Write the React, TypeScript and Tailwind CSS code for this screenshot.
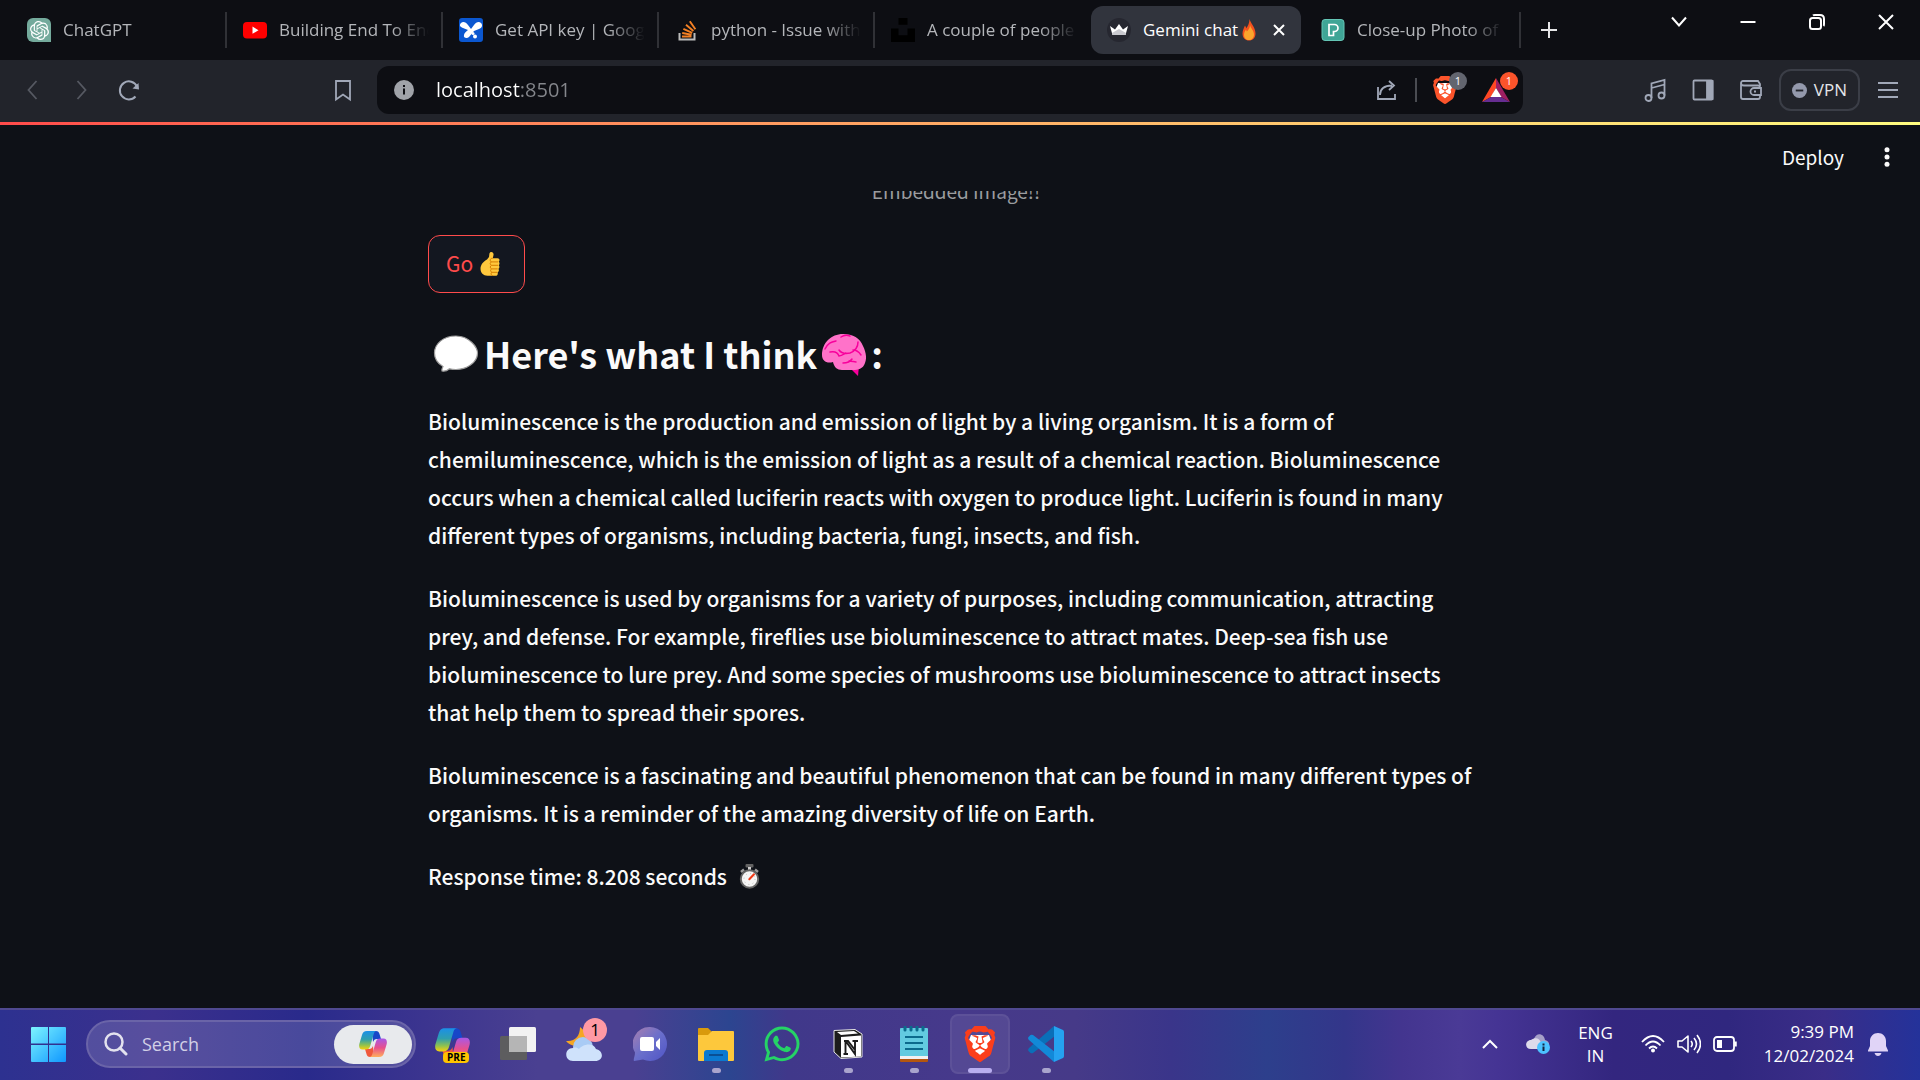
import type { ReactNode } from "react";
import { SiBrave, SiOpenai } from "react-icons/si";
import { FaWhatsapp } from "react-icons/fa";

const paragraphs = [
  "Bioluminescence is the production and emission of light by a living organism. It is a form of chemiluminescence, which is the emission of light as a result of a chemical reaction. Bioluminescence occurs when a chemical called luciferin reacts with oxygen to produce light. Luciferin is found in many different types of organisms, including bacteria, fungi, insects, and fish.",
  "Bioluminescence is used by organisms for a variety of purposes, including communication, attracting prey, and defense. For example, fireflies use bioluminescence to attract mates. Deep-sea fish use bioluminescence to lure prey. And some species of mushrooms use bioluminescence to attract insects that help them to spread their spores.",
  "Bioluminescence is a fascinating and beautiful phenomenon that can be found in many different types of organisms. It is a reminder of the amazing diversity of life on Earth.",
];

function Flame() {
  return (
    <svg viewBox="0 0 14 22" className="h-[22px] w-[14px] shrink-0" aria-label="fire">
      <path d="M7.5 0C8 3.5 13.5 8 13.5 14.5 13.5 19 10.5 21.500 7 21.500S.5 19 .5 14.500C.5 11 2 9 3 6.500c.7 1 1 1.800 1.200 2.800C6 7 7.500 4 7.500 0Z" fill="#f4511e" />
      <path d="M8 6c.5 3 4 5.500 4 9.500 0 3.500-2.200 5.500-5 5.500s-5-2-5-5.300C2 13.500 3 12 4 10.500c.4.700.6 1.200.8 2C6.500 11 8 9 8 6Z" fill="#fba52c" />
    </svg>
  );
}

function Thumb() {
  return (
    <svg viewBox="0 0 28 24" className="h-6 w-7" aria-label="thumbs up">
      <path d="M8 7.500 10 5l.4-3.200C10.600.6 11.400 0 12.300 0c1.600 0 2.500 1.300 2.200 3l-.7 3.200h4.700c1.300 0 2 .8 2 1.900 0 .7-.3 1.300-.8 1.600.6.4.8 1 .8 1.700 0 .8-.3 1.500-.8 1.900.5.4.7 1 .7 1.600 0 .9-.4 1.500-1 1.900.3.400.5.900.5 1.500 0 1-.6 1.700-1.300 2 .2.400.2.700.2 1.100 0 1.400-.9 2.300-2.300 2.300H8.500C4.300 23.700 1.500 20.800 1.500 16.800 1.500 12.700 4.500 9.500 8 7.500Z" fill="#ffc83d" />
      <path d="M19 9.900h-6.500M19 13.300h-6.500M18.700 16.900h-6.200M18.200 20.300h-5.500M13.800 6.200c-1.800 0-2.600.8-2.600 2s.7 1.600 1.300 1.700c-1 .3-1.300 1-1.300 1.700s.4 1.500 1.300 1.700c-.8.300-1.200 1-1.200 1.800s.4 1.500 1.200 1.800c-.6.300-.9.900-.9 1.600 0 .9.500 1.500 1.200 1.800-.5.300-.7.800-.7 1.400 0 1 .7 2 2 2" fill="none" stroke="#d67d00" strokeWidth="1" />
    </svg>
  );
}

function SpeechBubble() {
  return (
    <svg viewBox="0 -2 46 40" className="h-10 w-[46px] shrink-0" aria-label="speech balloon">
      <path d="M23 1C10 1 1.500 9 1.500 18c0 6 3.300 10.500 8.500 13.500-.8 1.500-1.500 3-1 4.500 2.500.5 5.500-.5 7.500-2.200C18.500 34.300 21 34.500 23 34.500 33 34.500 44.500 28 44.500 18 44.500 12 36 1 23 1Z" fill="#fff" stroke="#9b9b9b" strokeWidth="1.200" />
    </svg>
  );
}

function Brain() {
  return (
    <svg viewBox="0 -4 44 46" className="h-[46px] w-[44px] shrink-0" aria-label="brain">
      <path d="M27 33l9 9 1-10Z" fill="#f8009c" />
      <path d="M21 0C31 0 38 4 41 12c3 6 4 12 2 17-2 6-7 7-12 7H20c-5 0-8-3-9-8-6 2-11-1-11-7C0 9 9 0 21 0Z" fill="#ff72c9" />
      <path d="M19 3c3-2 6-2 9-1M3 15c3-6 6-7 11-8M36 8c0 6-3 9-8 11-5 1-9 0-11-3M8 18c5-1 8 1 9 4 3 0 5-2 7-3M31 16c4 0 6 2 8 5M21 29c5 0 7-1 9-4M27 27c3 0 5 1 7 1" fill="none" stroke="#f8009c" strokeWidth="1.500" strokeLinecap="round" />
    </svg>
  );
}

function Stopwatch() {
  return (
    <svg viewBox="0 0 21 25" className="h-[25px] w-[21px]" aria-label="stopwatch">
      <rect x="6.500" y="0" width="8" height="3.500" rx="1" fill="#636363" />
      <rect x="9" y="3" width="3" height="3" fill="#cfcfcf" />
      <path d="m2 8 3-2.500M19 8l-3-2.500" stroke="#9b9b9b" strokeWidth="2.500" />
      <circle cx="10.500" cy="15" r="8.700" fill="#f5f5f5" stroke="#636363" strokeWidth="2" />
      <circle cx="10.500" cy="15" r="5.500" fill="none" stroke="#bdbdbd" strokeWidth="1" strokeDasharray="1 3.300" />
      <path d="m10.300 15.300 4.700-5" stroke="#f03a17" strokeWidth="2" strokeLinecap="round" />
    </svg>
  );
}

function YouTubeIcon() {
  return (
    <svg viewBox="0 0 24 24" className="size-6">
      <rect y="4" width="24" height="16.500" rx="4" fill="#f00" />
      <path d="m9.500 8.600 6 3.600-6 3.600Z" fill="#fff" />
    </svg>
  );
}

function MakerSuiteIcon() {
  return (
    <svg viewBox="0 0 24 24" className="size-6">
      <rect width="24" height="24" rx="3" fill="#0b57d0" />
      <g fill="#fff">
        <path d="M2 5c2-2 5-1 7 2l3 4 3-4c2-3 5-4 7-2s1 5-2 6l-5 2-5 6c-2 2-6 1-5-2 0-2 2-3 4-5L4 10C1 9 0 7 2 5Z" />
        <circle cx="16" cy="18.500" r="2" />
        <circle cx="14" cy="15.500" r="1.500" />
      </g>
    </svg>
  );
}

function StackIcon() {
  return (
    <svg viewBox="0 0 24 24" className="size-6" fill="none">
      <path d="M4.500 15v6.500h15V15" stroke="#bcbbbb" strokeWidth="2" />
      <path d="M7 18.500h9.500M7.200 15l9.400 1.800M8.400 10.800l8.800 4M11 6.700l7.400 6.200M14.800 3.200l5.600 8" stroke="#f48024" strokeWidth="1.900" />
    </svg>
  );
}

function UnsplashIcon() {
  return (
    <svg viewBox="0 0 24 24" className="size-6" fill="#000">
      <path d="M7.500 0h9v6.700h-9zM0 10.500h7.500v6.800h9v-6.800H24V24H0Z" />
    </svg>
  );
}

function CrownIcon() {
  return (
    <svg viewBox="0 0 24 24" className="size-6">
      <circle cx="12" cy="12" r="12" fill="#262730" />
      <path d="m3 8 5 3.500 4-5.500 4 5.500L21 8l-2.500 9h-13Z" fill="#fff" />
      <path d="m5 15 7-4 7 4-.5 2h-13Z" fill="#c9c9cf" />
    </svg>
  );
}

function PexelsIcon() {
  return (
    <svg viewBox="0 0 24 24" className="size-6">
      <rect x="1" y="1.500" width="22" height="21" rx="3" fill="#3fa596" stroke="#64c5b5" />
      <path d="M8 6.500h5.500a3.500 3.500 0 0 1 0 7H12.500v4H8Z" fill="none" stroke="#fff" strokeWidth="1.700" />
    </svg>
  );
}

function Tab({ icon, title, last }: { icon: ReactNode; title: string; last?: boolean }) {
  return (
    <button
      role="tab"
      aria-selected={false}
      className={
        last
          ? "ml-1 flex h-9 w-[216px] min-w-0 items-center gap-3 border-r-2 border-[#303136] pr-4 pl-4"
          : "flex h-9 w-[216px] min-w-0 items-center gap-3 border-r-2 border-[#303136] pr-3 pl-4 nth-[5]:border-transparent"
      }
    >
      <span className="shrink-0">{icon}</span>
      <span className="min-w-0 flex-1 overflow-hidden text-left whitespace-nowrap text-[#b4b6ba] mask-r-from-75% mask-r-to-100%">
        {title}
      </span>
    </button>
  );
}

function TabStrip() {
  return (
    <div className="flex h-[60px] items-start justify-between bg-[#0d0e13]">
      <div className="flex h-[60px] min-w-0 items-center pl-[11px]" role="tablist">
        <Tab
          title="ChatGPT"
          icon={
            <span className="flex size-6 items-center justify-center rounded-l-md rounded-tr-md bg-[#74aa9c] text-white">
              <SiOpenai className="size-[19px]" />
            </span>
          }
        />
        <Tab title="Building End To End" icon={<YouTubeIcon />} />
        <Tab title="Get API key | Google" icon={<MakerSuiteIcon />} />
        <Tab title="python - Issue with" icon={<StackIcon />} />
        <Tab title="A couple of people" icon={<UnsplashIcon />} />
        <div role="tab" aria-selected className="flex h-12 w-[210px] items-center gap-3 rounded-xl bg-[#31343d] px-4 text-white">
          <CrownIcon />
          <span className="flex flex-1 items-center gap-1 whitespace-nowrap">
            Gemini chat <Flame />
          </span>
          <button aria-label="Close tab">
            <svg viewBox="0 0 12 12" className="size-3" stroke="#fff" strokeWidth="2">
              <path d="m1 1 10 10M11 1 1 11" />
            </svg>
          </button>
        </div>
        <Tab title="Close-up Photo of" icon={<PexelsIcon />} last />
        <button aria-label="New tab" className="px-5">
          <svg viewBox="0 0 16 16" className="size-4" stroke="#e6e6e8" strokeWidth="2">
            <path d="M8 0v16M0 8h16" />
          </svg>
        </button>
      </div>
      <div className="flex">
        <WindowButton label="Search tabs"><path d="m1 3.500 7 8 7-8" /></WindowButton>
        <WindowButton label="Minimize"><path d="M.5 8h15" /></WindowButton>
        <WindowButton label="Restore">
          <rect x="1" y="4" width="11" height="11" rx="2.500" />
          <path d="M4 1.500c.5-.5 1-.5 2-.5h5c2.500 0 4 1.500 4 4v5c0 1 0 1.500-.5 2" />
        </WindowButton>
        <WindowButton label="Close"><path d="m1 1 14 14M15 1 1 15" /></WindowButton>
      </div>
    </div>
  );
}

function WindowButton({ label, children }: { label: string; children: ReactNode }) {
  return (
    <button aria-label={label} className="flex h-11 w-[69px] items-center justify-center">
      <svg viewBox="0 0 16 16" className="size-4" fill="none" stroke="#fff" strokeWidth="2">
        {children}
      </svg>
    </button>
  );
}

function ToolIcon({ label, children, dim }: { label: string; children: ReactNode; dim?: boolean }) {
  return (
    <button aria-label={label} className={dim ? "flex h-12 w-12 items-center justify-center text-[#565962]" : "flex h-12 w-12 items-center justify-center text-[#a1a8b8]"}>
      <svg viewBox="0 0 24 24" className="size-6" fill="none" stroke="currentColor" strokeWidth="1.800">
        {children}
      </svg>
    </button>
  );
}

function BraveLogo({ className }: { className: string }) {
  return (
    <span className={className}>
      <svg viewBox="0 0 24 24" className="col-start-1 row-start-1 size-full">
        <path d="M6 6h12l1.500 4-3 9-4.500 3-4.500-3-3-9Z" fill="#fff" />
      </svg>
      <SiBrave className="col-start-1 row-start-1 size-full" />
    </span>
  );
}

function Toolbar() {
  return (
    <div className="flex h-[62px] items-center justify-between bg-[#22242b] pr-2 pb-0.5 pl-[9px]">
      <div className="flex w-[368px] items-center">
        <ToolIcon label="Back" dim><path d="m15.500 3-8 9 8 9" /></ToolIcon>
        <ToolIcon label="Forward" dim><path d="m8.500 3 8 9-8 9" /></ToolIcon>
        <ToolIcon label="Reload">
          <path d="M18.500 18.500A9 9 0 1 1 20 8.500" strokeWidth="2" />
          <path d="m21.500 5 .5 6.500-6.500-1Z" fill="currentColor" stroke="none" />
        </ToolIcon>
        <div className="flex flex-1 justify-end pr-2.5">
          <ToolIcon label="Bookmark this page"><path d="M5 3h14v18.500l-7-5-7 5Z" /></ToolIcon>
        </div>
      </div>
      <div className="flex h-12 min-w-0 flex-1 items-center rounded-xl bg-[#0d0e13] pr-1.5 pl-[17px]">
        <svg viewBox="0 0 20 20" className="size-5 shrink-0">
          <circle cx="10" cy="10" r="10" fill="#a0a3a9" />
          <path d="M10 8.500v6M10 5v2" stroke="#0d0e13" strokeWidth="2" />
        </svg>
        <input
          aria-label="Address"
          defaultValue="localhost:8501"
          className="ml-[22px] min-w-0 flex-1 bg-linear-[to_right,#ffffff_84px,#85878c_84px] bg-clip-text text-xl text-transparent caret-white outline-none"
        />
        <ToolIcon label="Share">
          <path d="M4 9v12h17v-5M6 17c0-6 4-9.500 12-9.500M15 3l5 4.500L15 12" />
        </ToolIcon>
        <span className="ml-[5px] h-6 w-0.5 bg-[#4a4c52]" />
        <button aria-label="Brave Shields" className="relative ml-3 flex h-12 w-8 items-center justify-center">
          <BraveLogo className="grid size-7 text-[#fb542b]" />
          <span className="absolute top-1.5 -right-1.5 flex size-[18px] items-center justify-center rounded-full bg-[#62656f] text-[11px] text-white">1</span>
        </button>
        <button aria-label="Brave Rewards" className="relative mr-[5px] ml-[19px] flex h-12 w-8 items-center justify-center">
          <svg viewBox="0 0 28 24" className="h-6 w-7">
            <path d="M14 0 0 24l9-5 5-9Z" fill="#ff4724" />
            <path d="M0 24h28l-9-5H9Z" fill="#662d91" />
            <path d="m14 0 14 24-9-5-5-9Z" fill="#9e1f63" />
            <path d="m14 10 5.500 9h-11Z" fill="#fff" />
          </svg>
          <span className="absolute top-1.5 -right-1.5 flex size-[18px] items-center justify-center rounded-full bg-[#fb542b] text-[11px] text-white">1</span>
        </button>
      </div>
      <div className="ml-[108px] flex items-center">
        <ToolIcon label="Playlist">
          <circle cx="5.500" cy="20" r="3" />
          <circle cx="18.500" cy="17.500" r="3" />
          <path d="M8.500 20V5.500L21.500 2v15.500M8.500 10l13-3.500" />
        </ToolIcon>
        <ToolIcon label="Sidebar">
          <rect x="2.500" y="2.500" width="19" height="19" rx="1" />
          <path d="M16 3h5.500v18H16Z" fill="currentColor" />
        </ToolIcon>
        <ToolIcon label="Wallet">
          <path d="M21 8V6L19 3H4a2 2 0 0 0-2 2v14a2 2 0 0 0 2 2h15a2 2 0 0 0 2-2v-2M2 5c0 2 1 2.500 3 2.500h14a2 2 0 0 1 2 2V10M22 10h-7a3.500 3.500 0 0 0 0 7h7ZM15 13.500h2" />
        </ToolIcon>
        <button className="mx-1 flex h-[42px] items-center gap-[7px] rounded-xl border-2 border-[#3b3e47] px-[11px] text-[#e4e6ea]">
          <svg viewBox="0 0 16 16" className="size-[15px]">
            <circle cx="8" cy="8" r="8" fill="#9499ac" />
            <path d="M4 8h8" stroke="#22242b" strokeWidth="2" />
          </svg>
          VPN
        </button>
        <ToolIcon label="Menu"><path d="M2 5h20M2 12h20M2 19h20" /></ToolIcon>
      </div>
    </div>
  );
}

function Page() {
  return (
    <main className="flex min-h-0 flex-1 flex-col bg-[#0e1117] font-['Noto_Sans_CJK_SC',sans-serif] text-[#fafafa]">
      <div className="h-[3px] shrink-0 bg-linear-to-r from-[#ff4b4b] to-[#fffd80]" />
      <header className="flex h-[66px] shrink-0 items-center justify-end gap-7 pr-[18px] pb-0.5">
        <button className="text-[19px]">Deploy</button>
        <button aria-label="Main menu" className="flex w-[30px] justify-center">
          <svg viewBox="0 0 6 20" className="h-5 w-1.5" fill="#fafafa">
            <circle cx="3" cy="2.700" r="2.500" />
            <circle cx="3" cy="10" r="2.500" />
            <circle cx="3" cy="17.300" r="2.500" />
          </svg>
        </button>
      </header>
      <div className="min-h-0 flex-1 overflow-hidden pr-2">
        <article className="mx-auto max-w-[1056px]">
          <p className="-mt-4 text-center text-[19px] leading-8 text-[#9a9c9f]">Embedded Image!!</p>
          <button className="mt-7 flex h-[58px] items-center gap-1.5 rounded-xl border border-[#ff4b4b] bg-[#131720] px-[17px] text-[21px] text-[#ff4b4b]">
            Go <Thumb />
          </button>
          <h3 className="mt-[35px] flex items-center gap-[5px] pl-[5px] text-4xl leading-[50px] font-bold">
            <SpeechBubble />
            <span>Here's what I think</span>
            <Brain />
            <span>:</span>
          </h3>
          <div className="mt-6 flex flex-col gap-[25px] text-[21px] leading-[38px] font-medium">
            {paragraphs.map((text) => (
              <p key={text}>{text}</p>
            ))}
            <p className="flex items-center gap-3">
              Response time: 8.208 seconds <Stopwatch />
            </p>
          </div>
        </article>
      </div>
    </main>
  );
}

function CopilotIcon({ className, id }: { className: string; id: string }) {
  return (
    <svg viewBox="0 0 28 26" className={className}>
      <defs>
        <linearGradient id={id + "a"} x1="0" y1="0" x2="0" y2="1">
          <stop offset="0" stopColor="#1b8fe8" />
          <stop offset=".45" stopColor="#2f9fae" />
          <stop offset=".75" stopColor="#8cc152" />
          <stop offset="1" stopColor="#f6d20c" />
        </linearGradient>
        <linearGradient id={id + "b"} x1="0" y1="0" x2="0" y2="1">
          <stop offset="0" stopColor="#a858e8" />
          <stop offset=".5" stopColor="#e8508c" />
          <stop offset="1" stopColor="#ffae5c" />
        </linearGradient>
      </defs>
      <path d="M13 0h4c2 0 3 1 3.500 3L22 8h-4c-2.500 0-3 1-4 3Z" fill="#1746c8" />
      <path d="M15 26h-4c-2 0-3-1-3.500-3L6 18h4c2.500 0 3-1 4-3Z" fill="#f0583c" />
      <path d="M8 0h10c-2 0-2.700 1-3.300 3l-3.500 12c-.7 2.500-2 3.500-4.500 3.500H3.500C.5 18.500-.3 16 .3 13L3 4C3.800 1.500 5 0 8 0Z" fill={`url(#${id}a)`} />
      <path d="M20 26H10c2 0 2.700-1 3.300-3l3.500-12c.7-2.500 2-3.500 4.500-3.500h3.200c3 0 3.800 2.500 3.200 5.500L25 22c-.8 2.500-2 4-5 4Z" fill={`url(#${id}b)`} />
    </svg>
  );
}

function TaskButton({ label, children, running }: { label: string; children: ReactNode; running?: boolean }) {
  return (
    <button aria-label={label} className="relative flex h-[60px] w-[66px] items-center justify-center">
      {children}
      {running && <span className="absolute bottom-px h-[5px] w-[9px] rounded-full bg-[#a9a4cd]" />}
    </button>
  );
}

function Taskbar() {
  return (
    <footer className="flex h-[72px] shrink-0 items-center justify-between border-t-2 border-[#4f4990] bg-linear-[to_right,#2d3190_0%,#3b308d_8%,#292a8b_16%,#3b348f_22%,#4a4091_28%,#4a4091_33%,#2c4590_38%,#40388a_41%,#46398b_50%,#463a88_56%,#3a358a_61%,#2d3f8c_66%,#33368a_70%,#43358f_73%,#4a3a96_76%,#453494_78%,#33267f_84%,#30277f_90%,#3a2d88_95%,#24329a_100%] pb-0.5 text-white">
      <div className="flex items-center">
        <button aria-label="Start" className="ml-[31px]">
          <svg viewBox="0 0 35 35" className="size-[35px]">
            <defs>
              <linearGradient id="win" x1="0" y1="0" x2="1" y2="1">
                <stop offset="0" stopColor="#7df4ff" />
                <stop offset="1" stopColor="#0f97ff" />
              </linearGradient>
            </defs>
            <path d="M1 0h16v16.500H0V1Q0 0 1 0ZM18 0h16q1 0 1 1v15.500H18ZM0 18h17v17H1q-1 0-1-1ZM18 18h17v16q0 1-1 1H18Z" fill="url(#win)" />
          </svg>
        </button>
        <div className="ml-5 flex h-12 w-[330px] items-center rounded-full border-2 border-[#6a64a8] bg-white/15 pr-0.5 pl-4">
          <svg viewBox="0 0 24 24" className="size-6 shrink-0" fill="none" stroke="#e3e2ee" strokeWidth="2.500">
            <circle cx="10" cy="10" r="8.500" />
            <path d="m16 16 6 6" strokeWidth="3" strokeLinecap="round" />
          </svg>
          <input aria-label="Search" placeholder="Search" className="ml-3.5 min-w-0 flex-1 bg-transparent text-lg outline-none placeholder:text-[#d2d0e6]" />
          <button aria-label="Copilot suggestions" className="flex h-[39px] w-[78px] items-center justify-center rounded-full bg-[#e8eaed]">
            <CopilotIcon id="cs" className="h-[26px] w-7" />
          </button>
        </div>
        <div className="ml-[3px] flex items-center">
          <TaskButton label="Copilot preview">
            <CopilotIcon id="cp" className="h-[33px] w-[35px]" />
            <span className="absolute bottom-[11px] left-[24px] rounded bg-[#ffc400] px-1 text-[10px] leading-[11px] font-bold text-black">PRE</span>
          </TaskButton>
          <TaskButton label="Task view">
            <svg viewBox="0 0 36 34" className="h-[34px] w-9">
              <rect y="9" width="27" height="24" rx="1.500" fill="#5d5d5f" />
              <rect x="9" width="27" height="25" rx="1.500" fill="#f2f2f2" />
              <path d="M9 9h18v16H9Z" fill="#b5b5b5" />
            </svg>
          </TaskButton>
          <TaskButton label="Weather">
            <svg viewBox="0 0 36 34" className="h-[34px] w-9">
              <path d="M14 0c8 5 8 16 0 18-5 2-11 0-14-4 9 1 14-5 14-14Z" fill="#f5a623" />
              <circle cx="17" cy="20" r="10" fill="#a9cbf5" />
              <path d="M7 21c2-1 5 0 6 1 2-4 14-8 17 0 8 2 8 12-1 12H7C-2 34-2 21 7 21Z" fill="#cfe2fb" />
            </svg>
            <span className="absolute top-1 right-2.5 flex size-6 items-center justify-center rounded-full bg-[#ff99a4] text-[17px] text-black">1</span>
          </TaskButton>
          <TaskButton label="Chat">
            <svg viewBox="0 0 34 34" className="size-[34px]">
              <defs>
                <linearGradient id="chat" x1="0" y1="0" x2="1" y2="1">
                  <stop offset="0" stopColor="#a97fae" />
                  <stop offset=".5" stopColor="#6a6fcb" />
                  <stop offset="1" stopColor="#4f54c6" />
                </linearGradient>
              </defs>
              <path d="M17 0a17 17 0 1 1-7 32.500L1 34c-1-1 1-5 1-8.500A17 17 0 0 1 17 0Z" fill="url(#chat)" />
              <rect x="7" y="10" width="14" height="14" rx="2" fill="#fff" />
              <path d="m23 15 4-4v12l-4-4Z" fill="#fff" />
            </svg>
          </TaskButton>
          <TaskButton label="File Explorer" running>
            <svg viewBox="0 0 36 33" className="h-[33px] w-9">
              <path d="M0 1q0-1 1-1h9l4 4h20v8H0Z" fill="#d99a0b" />
              <path d="M0 7h10l4-4h21q1 0 1 1v28q0 1-1 1H1q-1 0-1-1Z" fill="#fdc83c" />
              <path d="M6 33v-8q0-3 3-3h18q3 0 3 3v8Z" fill="#0b79d0" />
              <path d="M11 27h14" stroke="#0a4f94" strokeWidth="2" />
            </svg>
          </TaskButton>
          <TaskButton label="WhatsApp">
            <FaWhatsapp className="size-10 text-[#25d366]" />
          </TaskButton>
          <TaskButton label="Notion" running>
            <svg viewBox="0 0 30 30" className="size-[30px]">
              <path d="M1 1.500 22 .5l7 4.500v23L8 29.500 1 23Z" fill="#1c1c1c" stroke="#e6e6e6" />
              <path d="M8 8 28 6.500v21L8 28.500Z" fill="#fff" />
              <path d="m4 3 17-1 4 2.500L8 6Z" fill="#fff" />
              <path d="M11 12h4l7 9v-8.500M12.500 12v13M10.500 25h4.500M19.500 12H25M22 12v13L13 12.500" fill="none" stroke="#1c1c1c" strokeWidth="1.900" />
            </svg>
          </TaskButton>
          <TaskButton label="Notepad" running>
            <svg viewBox="0 0 28 36" className="h-9 w-7">
              <path d="M0 30h28v5q0 1-1 1H1q-1 0-1-1Z" fill="#b4560f" />
              <path d="M0 28h28v5H0Z" fill="#f1f1f1" />
              <path d="M0 3q0-1 1-1h26q1 0 1 1v27H0Z" fill="#62cbe0" />
              <path d="M5 11h18M5 17h18M5 23h18" stroke="#0b6a8c" strokeWidth="2" />
              <path d="M5 1v3M11 1v3M17 1v3M23 1v3" stroke="#0b6a8c" strokeWidth="3" strokeLinecap="round" />
            </svg>
          </TaskButton>
          <button aria-label="Brave" className="relative mx-[3px] flex size-[60px] items-center justify-center rounded-lg border-2 border-white/5 bg-white/8">
            <BraveLogo className="grid size-9 text-[#fb3e1b]" />
            <span className="absolute -bottom-px h-[5px] w-6 rounded-full bg-[#b9aef0]" />
          </button>
          <TaskButton label="Visual Studio Code" running>
            <svg viewBox="0 0 36 36" className="size-9">
              <path d="M26 0 27 10 5 27Q3 28 1.500 26L.5 25q-1-1.500.5-3Z" fill="#0a6fb8" />
              <path d="M26 36 27 26 5 9Q3 8 1.500 10L.5 11q-1 1.500.5 3Z" fill="#1289d8" />
              <path d="m26 0 9 4q1 .5 1 2v24q0 1.500-1 2l-9 4Z" fill="#25a2f0" />
            </svg>
          </TaskButton>
        </div>
      </div>
      <div className="flex items-center pr-8">
        <button aria-label="Show hidden icons">
          <svg viewBox="0 0 16 10" className="h-2.5 w-4" fill="none" stroke="#fff" strokeWidth="2">
            <path d="m1 9 7-7 7 7" />
          </svg>
        </button>
        <button aria-label="OneDrive" className="ml-7">
          <svg viewBox="0 0 24 20" className="h-5 w-6">
            <path d="M8 5c2-7 10-6 11 1 6 1 5 9 0 9H9Z" fill="#a6a0c8" />
            <path d="M5 15c-7 0-6-9 0-9 4-3 9-2 10 3v6Z" fill="#dedbea" />
            <circle cx="17.500" cy="13.500" r="6.500" fill="#4cc2ff" />
            <path d="M17.500 12.500V17M17.500 9.500v2" stroke="#14233c" strokeWidth="2" />
          </svg>
        </button>
        <button className="ml-7 text-center leading-[23px]">
          ENG
          <br />
          IN
        </button>
        <button aria-label="Quick settings" className="ml-7 flex items-center gap-3">
          <svg viewBox="0 0 24 18" className="h-[18px] w-6" fill="none" stroke="#fff" strokeWidth="1.800">
            <path d="M1 7q11-12 22 0M4.500 10.500q7.500-8 15 0M8 13.500q4-4 8 0" />
            <circle cx="12" cy="15.500" r="1.500" fill="#fff" stroke="none" />
            <circle cx="12" cy="15.500" r="1" />
          </svg>
          <svg viewBox="0 0 24 20" className="h-5 w-6" fill="none" stroke="#fff" strokeWidth="1.600" strokeLinejoin="round">
            <path d="M1 7v6h4l6 5V2L5 7ZM14 7q2.500 3 0 6M17 4q5 6 0 12M20 1q7 9 0 18" />
          </svg>
          <svg viewBox="0 0 24 16" className="h-4 w-6" fill="none" stroke="#fff" strokeWidth="1.800">
            <rect x="1" y="1" width="20" height="14" rx="3" />
            <path d="M4 4h5v8H4Z" fill="#fff" stroke="none" />
            <path d="M22.500 5.500v5" strokeWidth="2.500" />
          </svg>
        </button>
        <button className="ml-[27px] text-right leading-6">
          9:39 PM
          <br />
          12/02/2024
        </button>
        <button aria-label="Notifications" className="ml-3.5">
          <svg viewBox="0 0 20 23" className="h-[23px] w-5" fill="#e0d4f7">
            <path d="M10 0c4.500 0 8 3.500 8 8v5l2 4.500v1H0v-1L2 13V8c0-4.500 3.500-8 8-8ZM6.500 20h7q-1 3-3.500 3t-3.500-3Z" />
          </svg>
        </button>
      </div>
    </footer>
  );
}

export default function App() {
  return (
    <div className="flex h-screen flex-col overflow-hidden font-['Open_Sans',sans-serif] text-[17px]">
      <TabStrip />
      <Toolbar />
      <Page />
      <Taskbar />
    </div>
  );
}
